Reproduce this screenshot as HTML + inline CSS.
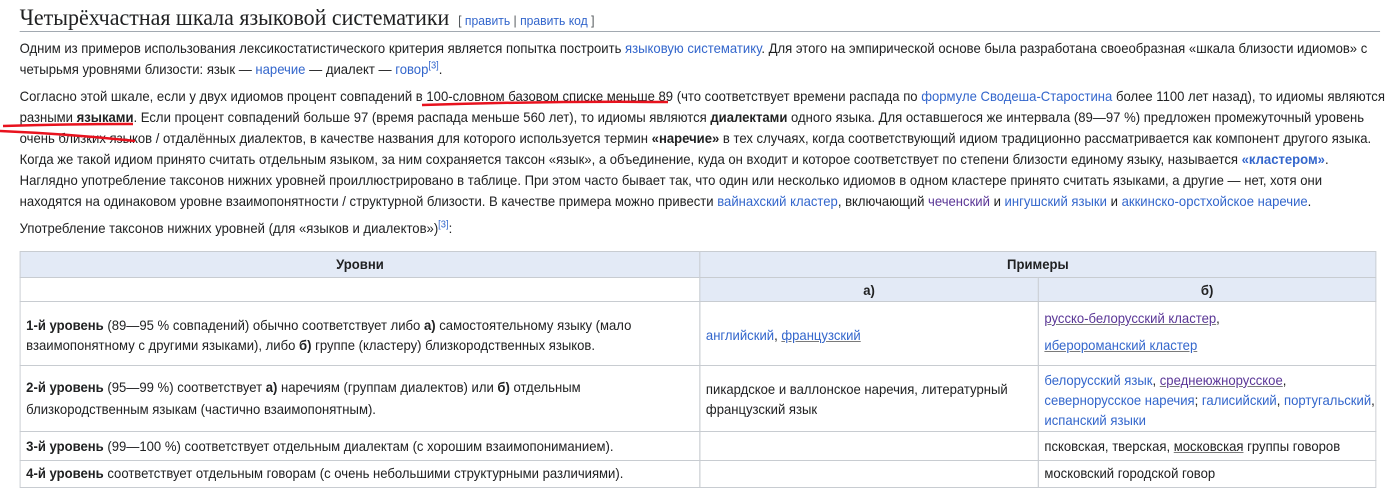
<!DOCTYPE html>
<html><head><meta charset="utf-8"><style>
body{margin:0;background:#fff;width:1395px;height:496px;overflow:hidden;position:relative;font-family:"Liberation Sans","Noto Sans CJK SC",sans-serif;color:#202122}
#c{position:absolute;left:0;top:0;width:1492px;height:496px;transform:scaleX(0.935);transform-origin:0 0}
.l{position:absolute;white-space:nowrap;font-size:14px;line-height:22px}
a{color:#3366cc;text-decoration:none}
a.u{text-decoration:underline;text-decoration-color:#7a7a7a}
a.v{color:#5a3696}
b{font-weight:bold}
sup{font-size:10px;line-height:0}
.cell{position:absolute;border:1px solid #c8ccd1;box-sizing:border-box}
.h{background:#e3eaf6}
.ctr{text-align:center}
</style></head><body>
<div id="c">
<div class="l" style="left:21px;top:4px;font-family:'Liberation Serif',serif;font-size:23.5px;line-height:28px">Четырёхчастная шкала языковой систематики <span style="font-family:'Liberation Sans',sans-serif;font-size:13px;color:#54595d">&nbsp;[ <a>править</a> | <a>править код</a> ]</span></div>
<div style="position:absolute;left:21px;top:31px;width:1455px;height:1px;background:#a2a9b1"></div>

<div class="l" style="left:21px;top:37px">Одним из примеров использования лексикостатистического критерия является попытка построить <a>языковую систематику</a>. Для этого на эмпирической основе была разработана своеобразная «шкала близости идиомов» с</div>
<div class="l" style="left:21px;top:58px">четырьмя уровнями близости: язык — <a>наречие</a> — диалект — <a>говор</a><sup><a>[3]</a></sup>.</div>

<div class="l" style="left:21px;top:85px">Согласно этой шкале, если у двух идиомов процент совпадений в 100-словном базовом списке меньше 89 (что соответствует времени распада по <a>формуле Сводеша-Старостина</a> более 1100 лет назад), то идиомы являются</div>
<div class="l" style="left:21px;top:106px">разными <b>языками</b>. Если процент совпадений больше 97 (время распада меньше 560 лет), то идиомы являются <b>диалектами</b> одного языка. Для оставшегося же интервала (89—97 %) предложен промежуточный уровень</div>
<div class="l" style="left:21px;top:127px">очень близких языков / отдалённых диалектов, в качестве названия для которого используется термин <b>«наречие»</b> в тех случаях, когда соответствующий идиом традиционно рассматривается как компонент другого языка.</div>
<div class="l" style="left:21px;top:148px">Когда же такой идиом принято считать отдельным языком, за ним сохраняется таксон «язык», а объединение, куда он входит и которое соответствует по степени близости единому языку, называется <a><b>«кластером»</b></a>.</div>
<div class="l" style="left:21px;top:169px">Наглядно употребление таксонов нижних уровней проиллюстрировано в таблице. При этом часто бывает так, что один или несколько идиомов в одном кластере принято считать языками, а другие — нет, хотя они</div>
<div class="l" style="left:21px;top:190px">находятся на одинаковом уровне взаимопонятности / структурной близости. В качестве примера можно привести <a>вайнахский кластер</a>, включающий <a class="v">чеченский</a> и <a>ингушский языки</a> и <a>аккинско-орстхойское наречие</a>.</div>

<div class="l" style="left:21px;top:217px">Употребление таксонов нижних уровней (для «языков и диалектов»)<sup><a>[3]</a></sup>:</div>

<div class="cell h" style="left:21px;top:251px;width:728px;height:27px"></div>
<div class="cell h" style="left:748px;top:251px;width:724px;height:27px"></div>
<div class="cell" style="left:21px;top:277px;width:728px;height:25px"></div>
<div class="cell h" style="left:748px;top:277px;width:363px;height:25px"></div>
<div class="cell h" style="left:1110px;top:277px;width:362px;height:25px"></div>
<div class="cell" style="left:21px;top:301px;width:728px;height:65px"></div>
<div class="cell" style="left:748px;top:301px;width:363px;height:65px"></div>
<div class="cell" style="left:1110px;top:301px;width:362px;height:65px"></div>
<div class="cell" style="left:21px;top:365px;width:728px;height:67px"></div>
<div class="cell" style="left:748px;top:365px;width:363px;height:67px"></div>
<div class="cell" style="left:1110px;top:365px;width:362px;height:67px"></div>
<div class="cell" style="left:21px;top:431px;width:728px;height:30px"></div>
<div class="cell" style="left:748px;top:431px;width:363px;height:30px"></div>
<div class="cell" style="left:1110px;top:431px;width:362px;height:30px"></div>
<div class="cell" style="left:21px;top:460px;width:728px;height:28px"></div>
<div class="cell" style="left:748px;top:460px;width:363px;height:28px"></div>
<div class="cell" style="left:1110px;top:460px;width:362px;height:28px"></div>

<div class="l ctr" style="left:21px;width:728px;top:253px"><b>Уровни</b></div>
<div class="l ctr" style="left:748px;width:724px;top:253px"><b>Примеры</b></div>
<div class="l ctr" style="left:748px;width:363px;top:279px"><b>а)</b></div>
<div class="l ctr" style="left:1110px;width:362px;top:279px"><b>б)</b></div>

<div class="l" style="left:28px;top:314px"><b>1-й уровень</b> (89—95 % совпадений) обычно соответствует либо <b>а)</b> самостоятельному языку (мало</div>
<div class="l" style="left:28px;top:334px">взаимопонятному с другими языками), либо <b>б)</b> группе (кластеру) близкородственных языков.</div>
<div class="l" style="left:755px;top:324px"><a>английский</a>, <a class="u">французский</a></div>
<div class="l" style="left:1117px;top:307px"><a class="u v">русско-белорусский кластер</a>,</div>
<div class="l" style="left:1117px;top:334px"><a class="u">иберороманский кластер</a></div>

<div class="l" style="left:28px;top:376px"><b>2-й уровень</b> (95—99 %) соответствует <b>а)</b> наречиям (группам диалектов) или <b>б)</b> отдельным</div>
<div class="l" style="left:28px;top:398px">близкородственным языкам (частично взаимопонятным).</div>
<div class="l" style="left:755px;top:378px">пикардское и валлонское наречия, литературный</div>
<div class="l" style="left:755px;top:398px">французский язык</div>
<div class="l" style="left:1117px;top:369px"><a>белорусский язык</a>, <a class="u v">среднеюжнорусское</a>,</div>
<div class="l" style="left:1117px;top:389px"><a>севернорусское наречия</a>; <a>галисийский</a>, <a>португальский</a>,</div>
<div class="l" style="left:1117px;top:409px"><a>испанский языки</a></div>

<div class="l" style="left:28px;top:435px"><b>3-й уровень</b> (99—100 %) соответствует отдельным диалектам (с хорошим взаимопониманием).</div>
<div class="l" style="left:1117px;top:435px">псковская, тверская, <a class="u" style="color:#202122">московская</a> группы говоров</div>
<div class="l" style="left:28px;top:462px"><b>4-й уровень</b> соответствует отдельным говорам (с очень небольшими структурными различиями).</div>
<div class="l" style="left:1117px;top:462px">московский городской говор</div>
</div>

<svg style="position:absolute;left:0;top:0" width="1395" height="496">
<path d="M422 105 Q545 101 668 102" stroke="#e8121e" stroke-width="2.5" fill="none"/>
<path d="M3 126 Q70 124 133 124" stroke="#e8121e" stroke-width="2.5" fill="none"/>
<path d="M0 131 Q70 134 135 141" stroke="#e8121e" stroke-width="2.5" fill="none"/>
</svg>
</body></html>
